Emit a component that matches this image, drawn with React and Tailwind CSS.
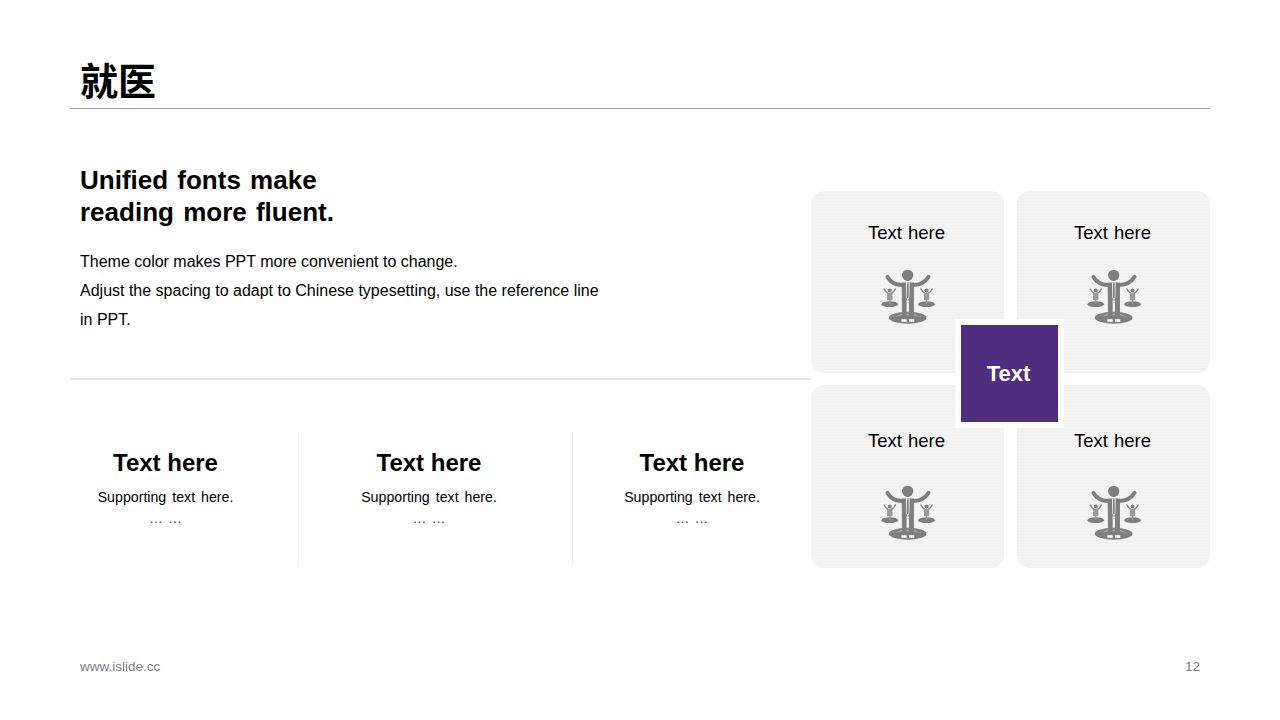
const FONT = "font-['Liberation_Sans','Noto_Sans_CJK_SC',sans-serif]";

// figure standing on a disc with two small ones beside him
const SmallFigure = ({ x }) => (
    <g transform={`translate(${x} 0)`}>
        <ellipse cx="0" cy="164" rx="25" ry="9" fill="#7f7f7f" />
        <path d="M-17 118 Q-12 129 -6 131 M17 118 Q12 129 6 131" fill="none" stroke="#8a8a8a" strokeWidth="4" strokeLinecap="round" />
        <circle cx="0" cy="123" r="6" fill="#7f7f7f" />
        <path d="M-8 130 H8 V152 H2 V164 H-2 V152 H-8 Z" fill="#9a9a9a" />
    </g>
);

const PersonIcon = () => (
    <svg width="55" height="58" viewBox="58 55 165 175" className="block">
        <SmallFigure x={87} />
        <SmallFigure x={198} />
        <ellipse cx="141" cy="205" rx="57" ry="18" fill="#7f7f7f" />
        <path d="M100 203 Q141 182 182 203 Q141 190 100 203 Z" fill="#b5b5b5" />
        <circle cx="141" cy="77" r="17" fill="#7f7f7f" />
        <path d="M80 82 Q94 106 124 106 M204 82 Q188 106 160 106" fill="none" stroke="#7f7f7f" strokeWidth="12" strokeLinecap="round" />
        <path d="M123 99 H160 V212 H145 V152 H138 V212 H124 Z" fill="#7f7f7f" />
        <path d="M136 99 H147 L146 145 L141 153 L137 145 Z" fill="#f2f2f2" />
        <path d="M139 101 H144 L144 143 L141 148 L139 143 Z" fill="#7f7f7f" />
        <path d="M122 210 H138 V217 H122 Z M145 210 H161 V217 H145 Z" fill="#ffffff" />
    </svg>
);

const Card = ({ height, textTop, iconTop }) => (
    <div className="flex flex-col items-center rounded-[13px] bg-[#f2f2f2] bg-[repeating-linear-gradient(0deg,#f1f1f1_0px,#f1f1f1_1px,#f3f3f3_1px,#f3f3f3_3px)]" style={{ height, paddingTop: textTop }}>
        <div className="pr-[2px] text-[18.5px] leading-[24px] text-black [word-spacing:1px]">Text here</div>
        <div style={{ marginTop: iconTop }}>
            <PersonIcon />
        </div>
    </div>
);

const Stat = ({ className }) => (
    <div className={`flex h-[134px] flex-col items-center pt-[16px] ${className}`}>
        <div className="text-[24px] leading-[29px] font-bold text-black">Text here</div>
        <div className="mt-[10px] text-[14.2px] leading-[20px] text-black [word-spacing:2px]">Supporting text here.</div>
        <div className="text-[14px] leading-[22px] text-[#444] [word-spacing:1px]">… …</div>
    </div>
);

export default function App() {
    return (
        <div className={`${FONT} flex h-[720px] w-[1280px] flex-col bg-white`}>
            <div className="mx-[70px] h-[109px] border-b border-[#a6a6a6] px-[10px] pt-[60px]">
                <h1 className="text-[38px] leading-[44px] font-bold text-black">就医</h1>
            </div>

            <div className="flex flex-1 pl-[70px]">
                <div className="w-[741px]">
                    <div className="h-[271px] border-b-2 border-[#e3e3e3] pl-[10px] pt-[55px]">
                        <h2 className="text-[26px] leading-[32px] font-bold text-black [word-spacing:2px]">
                            Unified fonts make
                            <br />
                            reading more fluent.
                        </h2>
                        <p className="mt-[19px] w-[530px] text-[16px] leading-[29px] text-black">
                            Theme color makes PPT more convenient to change.
                            <br />
                            Adjust the spacing to adapt to Chinese typesetting, use the reference line in PPT.
                        </p>
                    </div>
                    <div className="mt-[52px] flex">
                        <Stat className="w-[191px]" />
                        <div className="ml-[37px] h-[134px] w-px bg-[#efefef]" />
                        <Stat className="ml-[34px] w-[192px]" />
                        <div className="ml-[47px] h-[134px] w-px bg-[#efefef]" />
                        <Stat className="ml-[23px] w-[192px]" />
                    </div>
                </div>

                <div className="relative mt-[82px] h-[378px] w-[399px]">
                    <div className="grid grid-cols-2 gap-x-[13px] gap-y-[12px]">
                        <Card height={182} textTop={30} iconTop={23} />
                        <Card height={182} textTop={30} iconTop={23} />
                        <Card height={183} textTop={44} iconTop={31} />
                        <Card height={183} textTop={44} iconTop={31} />
                    </div>
                    <div className="absolute left-[144px] top-[128px] flex h-[109px] w-[109px] items-center justify-center border-[6px] border-white bg-[#4f2d7f] pr-[2px] text-[22px] font-bold text-white">
                        Text
                    </div>
                </div>
            </div>

            <div className="flex h-[109px] justify-between px-[80px] text-[13.5px] text-[#7f7f7f]">
                <span className="mt-[47px] leading-[17px]">www.islide.cc</span>
                <span className="mt-[47px] leading-[17px]">12</span>
            </div>
        </div>
    );
}
